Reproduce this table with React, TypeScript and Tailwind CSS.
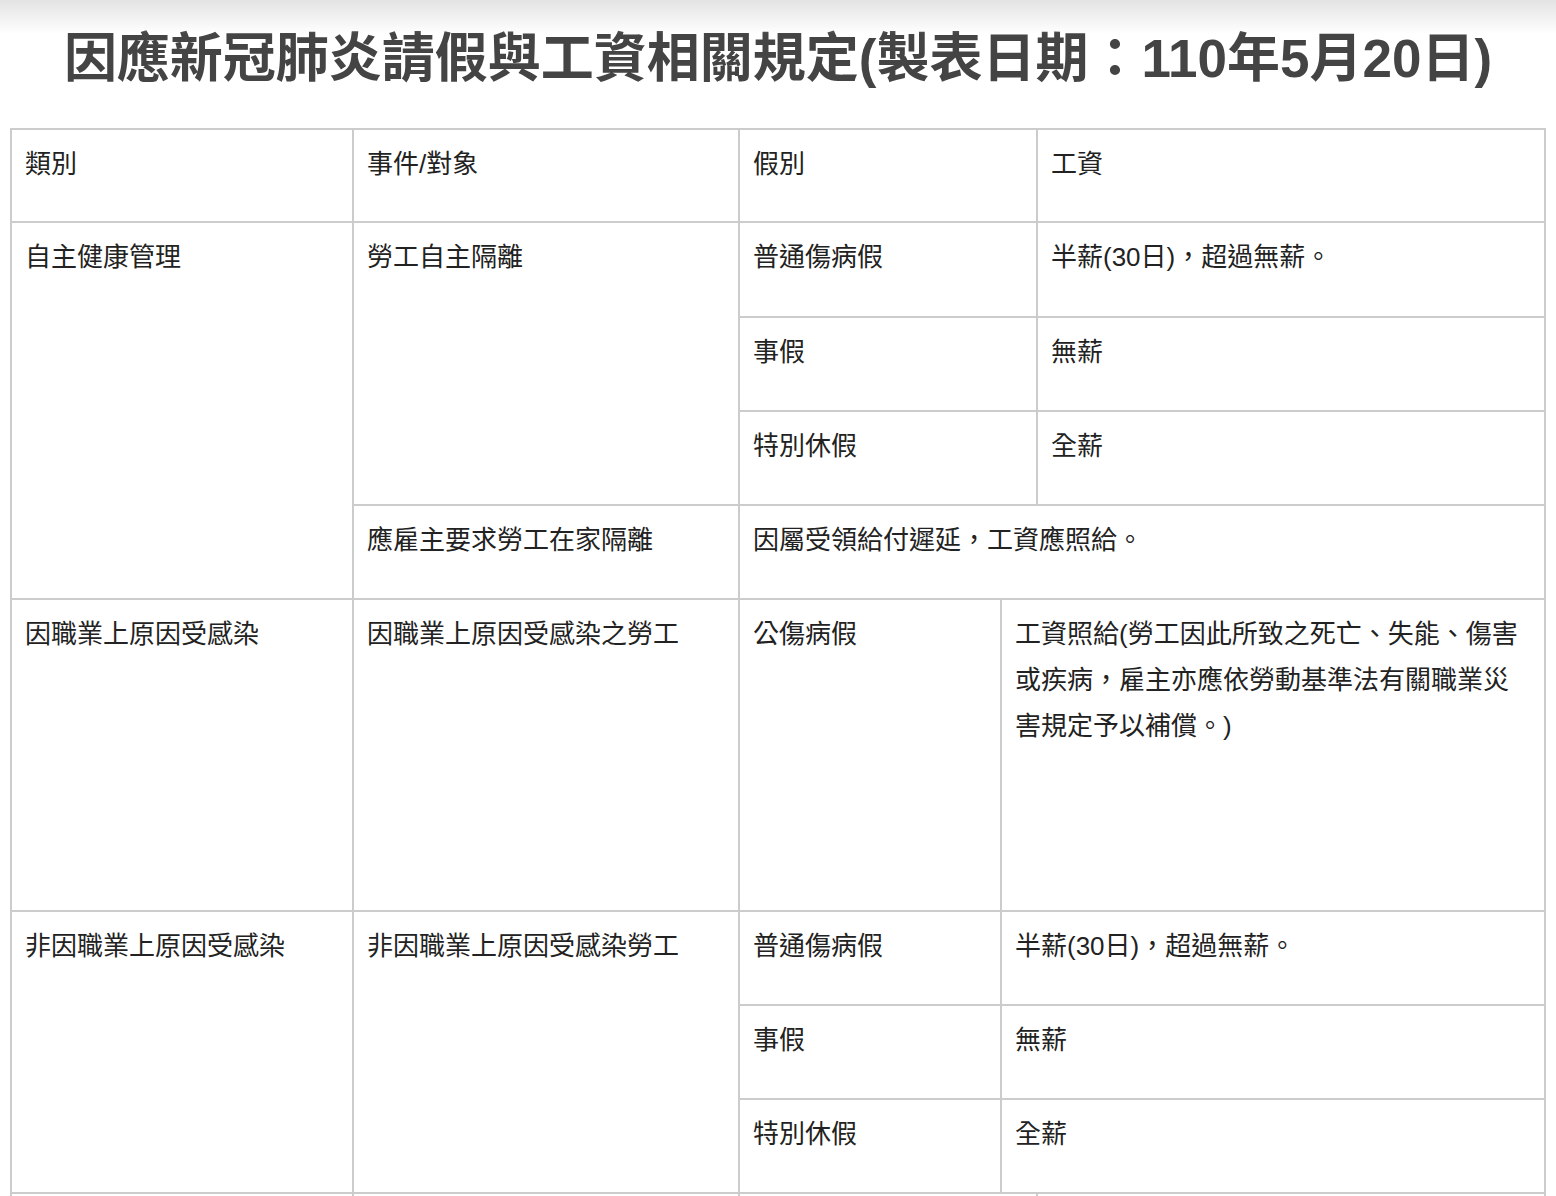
import React from "react";

const FONT = '"Liberation Sans", "Noto Sans CJK TC", sans-serif';

function Cell({
  className = "",
  children,
}: {
  className?: string;
  children?: React.ReactNode;
}) {
  return (
    <div
      className={
        "bg-white px-[13px] pt-[11px] text-[26px] leading-[46px] text-[#222] " +
        className
      }
    >
      {children}
    </div>
  );
}

export default function App() {
  return (
    <div
      className="relative min-h-[1196px] w-full bg-white"
      style={{ fontFamily: FONT }}
    >
      <div className="pointer-events-none absolute left-0 right-0 top-0 h-[34px] bg-linear-to-b from-[#e3e3e3] to-[#ffffff00]" />
      <div className="flex h-[117px] items-center justify-center">
        <h1 className="text-[53px] font-bold leading-[62px] text-[#444]">
          因應新冠肺炎請假與工資相關規定(製表日期：110年5月20日)
        </h1>
      </div>
      <div className="mx-[10px] mt-[11px] w-[1536px]">
        <div className="grid grid-cols-[340px_384px_260px_34px_506px] grid-rows-[91px_93px_92px_92px_92px_310px_92px_92px_92px_92px] gap-[2px] border-2 border-[#ccc] bg-[#ccc]">
          {/* header */}
          <Cell className="col-start-1 row-start-1">類別</Cell>
          <Cell className="col-start-2 row-start-1">事件/對象</Cell>
          <Cell className="col-start-3 col-span-2 row-start-1">假別</Cell>
          <Cell className="col-start-5 row-start-1">工資</Cell>

          {/* 自主健康管理 */}
          <Cell className="col-start-1 row-start-2 row-span-4">自主健康管理</Cell>
          <Cell className="col-start-2 row-start-2 row-span-3">勞工自主隔離</Cell>
          <Cell className="col-start-3 col-span-2 row-start-2">普通傷病假</Cell>
          <Cell className="col-start-5 row-start-2">半薪(30日)，超過無薪。</Cell>
          <Cell className="col-start-3 col-span-2 row-start-3">事假</Cell>
          <Cell className="col-start-5 row-start-3">無薪</Cell>
          <Cell className="col-start-3 col-span-2 row-start-4">特別休假</Cell>
          <Cell className="col-start-5 row-start-4">全薪</Cell>
          <Cell className="col-start-2 row-start-5">應雇主要求勞工在家隔離</Cell>
          <Cell className="col-start-3 col-span-3 row-start-5">
            因屬受領給付遲延，工資應照給。
          </Cell>

          {/* 因職業上原因受感染 */}
          <Cell className="col-start-1 row-start-6">因職業上原因受感染</Cell>
          <Cell className="col-start-2 row-start-6">因職業上原因受感染之勞工</Cell>
          <Cell className="col-start-3 row-start-6">公傷病假</Cell>
          <Cell className="col-start-4 col-span-2 row-start-6">
            <div className="whitespace-nowrap">工資照給(勞工因此所致之死亡、失能、傷害</div>
            <div className="whitespace-nowrap">或疾病，雇主亦應依勞動基準法有關職業災</div>
            <div className="whitespace-nowrap">害規定予以補償。)</div>
          </Cell>

          {/* 非因職業上原因受感染 */}
          <Cell className="col-start-1 row-start-7 row-span-3">非因職業上原因受感染</Cell>
          <Cell className="col-start-2 row-start-7 row-span-3">非因職業上原因受感染勞工</Cell>
          <Cell className="col-start-3 row-start-7">普通傷病假</Cell>
          <Cell className="col-start-4 col-span-2 row-start-7">半薪(30日)，超過無薪。</Cell>
          <Cell className="col-start-3 row-start-8">事假</Cell>
          <Cell className="col-start-4 col-span-2 row-start-8">無薪</Cell>
          <Cell className="col-start-3 row-start-9">特別休假</Cell>
          <Cell className="col-start-4 col-span-2 row-start-9">全薪</Cell>

          {/* next section begins just below the visible area */}
          <Cell className="col-start-1 row-start-10" />
          <Cell className="col-start-2 row-start-10" />
          <Cell className="col-start-3 col-span-2 row-start-10" />
          <Cell className="col-start-5 row-start-10" />
        </div>
      </div>
    </div>
  );
}
